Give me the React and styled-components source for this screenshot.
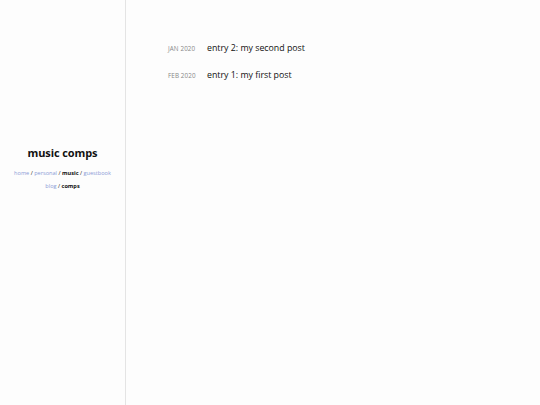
import React from "react";
import styled, { createGlobalStyle } from "styled-components";

const Global = createGlobalStyle`
  html, body { margin: 0; padding: 0; background: #fdfdfd; }
  body { font-family: "Open Sans", "Noto Sans", sans-serif; color: #111; }
`;

const Page = styled.div`
  display: flex;
  min-height: 405px;
`;

const Sidebar = styled.aside`
  width: 126px;
  border-right: 1px solid #e4e4e4;
  display: flex;
  flex-direction: column;
  align-items: center;
  justify-content: center;
  padding-bottom: 68px;
  box-sizing: border-box;
`;

const Title = styled.h1`
  margin: 0 0 7px;
  font-size: 11px;
  font-weight: 700;
  letter-spacing: -0.1px;
`;

const Nav = styled.div`
  font-size: 5.6px;
  line-height: 13px;
  text-align: center;
  white-space: nowrap;
  color: #111;
`;

const NavLink = styled.a`
  color: ${(p) => (p.$active ? "#111" : "#8a9bd6")};
  font-weight: ${(p) => (p.$active ? 700 : 400)};
  text-decoration: none;
`;

const Main = styled.main`
  flex: 1;
  padding: 42px 0 0 42px;
`;

const Entry = styled.div`
  display: flex;
  align-items: baseline;
  height: 27px;
`;

const Date = styled.span`
  width: 39px;
  font-size: 6.3px;
  color: #888;
  text-transform: uppercase;
  letter-spacing: 0.1px;
`;

const EntryTitle = styled.a`
  font-size: 8.8px;
  color: #111;
  text-decoration: none;
`;

const links = [
  ["home"], ["personal"], ["music", true], ["guestbook"], ["blog"], ["comps", true],
];

export default function App() {
  return (
    <>
      <Global />
      <Page>
        <Sidebar>
          <Title>music comps</Title>
          <Nav>
            {links.map(([l, a], i) => (
              <React.Fragment key={l}>
                <NavLink $active={a}>{l}</NavLink>
                {l === "guestbook" ? <br /> : i < links.length - 1 && " / "}
              </React.Fragment>
            ))}
          </Nav>
        </Sidebar>
        <Main>
          <Entry>
            <Date>jan 2020</Date>
            <EntryTitle>entry 2: my second post</EntryTitle>
          </Entry>
          <Entry>
            <Date>feb 2020</Date>
            <EntryTitle>entry 1: my first post</EntryTitle>
          </Entry>
        </Main>
      </Page>
    </>
  );
}
